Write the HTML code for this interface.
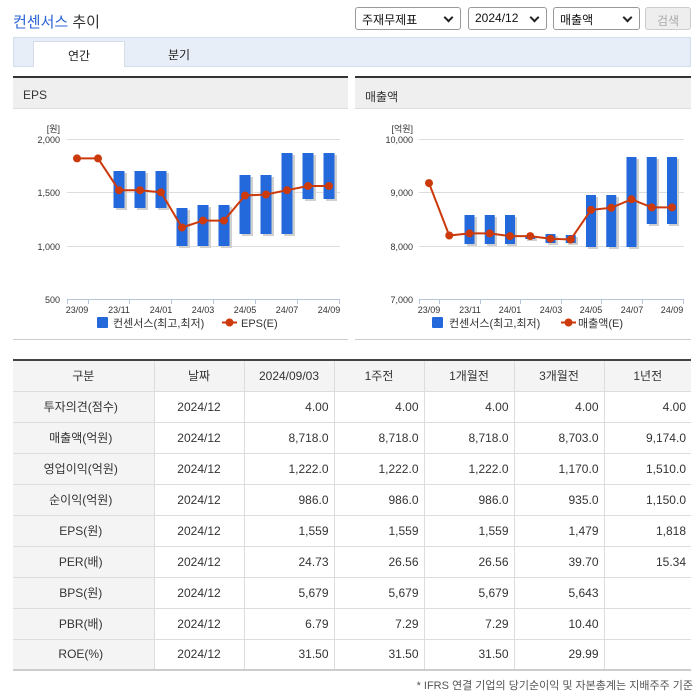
<!DOCTYPE html>
<html><head><meta charset="utf-8"><style>
*{margin:0;padding:0;box-sizing:border-box}
body{width:699px;height:696px;background:#fff;font-family:"Liberation Sans","Noto Sans CJK KR",sans-serif;color:#333;position:relative;overflow:hidden;font-size:12px}
.abs{position:absolute}
.sel{position:absolute;top:7px;height:23px;border:1px solid #999;border-radius:3px;background:#fff;font-size:12px;padding:3px 0 0 6px;color:#111}
.sel:after{content:"";position:absolute;right:8px;top:6px;width:5px;height:5px;border-right:2px solid #222;border-bottom:2px solid #222;transform:rotate(45deg)}
table{position:absolute;left:13px;top:359px;width:678px;border-collapse:collapse;border-top:2px solid #444;border-bottom:2px solid #ccc;font-size:12px}
td,th{height:31px;border-bottom:1px solid #ddd;border-left:1px solid #ddd;font-weight:normal;color:#333}
th{background:#f4f4f4;text-align:center}
td:first-child{background:#f4f4f4;text-align:center;border-left:none}
th:first-child{border-left:none}
td{text-align:right;padding-right:5px}
td.c{text-align:center;padding:0}
</style></head><body>
<div class="abs" style="left:13px;top:11px;font-size:15px"><span style="color:#2962d6">컨센서스</span> 추이</div>
<div class="sel" style="left:355px;width:106px">주재무제표</div>
<div class="sel" style="left:468px;width:79px">2024/12</div>
<div class="sel" style="left:553px;width:87px">매출액</div>
<div class="abs" style="left:645px;top:7px;width:46px;height:23px;border:1px solid #ccc;border-radius:3px;background:#eee;color:#aaa;text-align:center;padding-top:4px">검색</div>
<div class="abs" style="left:13px;top:37px;width:678px;height:30px;background:#e8eef8;border:1px solid #d5ddea"></div>
<div class="abs" style="left:33px;top:41px;width:92px;height:26px;background:#fff;border:1px solid #d5ddea;border-bottom:none;text-align:center;padding-top:5px;color:#222">연간</div>
<div class="abs" style="left:168px;top:46px;color:#222">분기</div>

<div class="abs" style="left:13px;top:76px;width:335px;height:33px;background:#efefef;border-top:2px solid #333;border-bottom:1px solid #ddd;padding:10px 0 0 10px">EPS</div>
<div class="abs" style="left:355px;top:76px;width:336px;height:33px;background:#efefef;border-top:2px solid #333;border-bottom:1px solid #ddd;padding:10px 0 0 10px">매출액</div>
<div class="abs" style="left:13px;top:339px;width:335px;height:1px;background:#ccc"></div>
<div class="abs" style="left:355px;top:339px;width:336px;height:1px;background:#ccc"></div>

<svg class="abs" style="left:0;top:0" width="699" height="696" font-family="Liberation Sans,Noto Sans CJK KR,sans-serif">
<g stroke="#ddd" stroke-width="1">
<line x1="67" y1="139.5" x2="340" y2="139.5"/><line x1="67" y1="192.5" x2="340" y2="192.5"/><line x1="67" y1="246.5" x2="340" y2="246.5"/>
<line x1="419" y1="139.5" x2="684" y2="139.5"/><line x1="419" y1="192.5" x2="684" y2="192.5"/><line x1="419" y1="246.5" x2="684" y2="246.5"/>
</g>
<g stroke="#b8c4d8" stroke-width="1">
<line x1="67" y1="299.5" x2="340" y2="299.5"/><line x1="419" y1="299.5" x2="684" y2="299.5"/>
<path d="M67.5 299v5M88.5 299v5M129.5 299v5M171.5 299v5M213.5 299v5M255.5 299v5M297.5 299v5M339.5 299v5"/>
<path d="M419.5 299v5M439.5 299v5M480.5 299v5M520.5 299v5M561.5 299v5M601.5 299v5M642.5 299v5M683.5 299v5"/>
</g>
<g font-size="9" fill="#333" text-anchor="end">
<text x="60" y="132">[원]</text><text x="60" y="143">2,000</text><text x="60" y="196">1,500</text><text x="60" y="250">1,000</text><text x="60" y="303">500</text>
<text x="413" y="132">[억원]</text><text x="413" y="143">10,000</text><text x="413" y="196">9,000</text><text x="413" y="250">8,000</text><text x="413" y="303">7,000</text>
</g>
<g font-size="9" fill="#333" text-anchor="middle">
<text x="77" y="313">23/09</text><text x="119" y="313">23/11</text><text x="161" y="313">24/01</text><text x="203" y="313">24/03</text><text x="245" y="313">24/05</text><text x="287" y="313">24/07</text><text x="329" y="313">24/09</text>
<text x="429" y="313">23/09</text><text x="470" y="313">23/11</text><text x="510" y="313">24/01</text><text x="551" y="313">24/03</text><text x="591" y="313">24/05</text><text x="632" y="313">24/07</text><text x="672" y="313">24/09</text>
</g>
<g fill="#d0d0d0">
<rect x="116" y="173" width="11" height="37"/><rect x="137" y="173" width="11" height="37"/><rect x="158" y="173" width="11" height="37"/>
<rect x="179" y="210" width="11" height="38"/><rect x="200" y="207" width="11" height="41"/><rect x="221" y="207" width="11" height="41"/>
<rect x="242" y="177" width="11" height="59"/><rect x="263" y="177" width="11" height="59"/><rect x="284" y="155" width="11" height="81"/>
<rect x="305" y="155" width="11" height="46"/><rect x="326" y="155" width="11" height="46"/>
<rect x="467" y="217" width="10" height="29"/><rect x="487" y="217" width="10" height="29"/><rect x="507" y="217" width="10" height="29"/>
<rect x="527" y="238" width="10" height="3"/><rect x="548" y="236" width="10" height="9"/><rect x="568" y="237" width="10" height="8"/>
<rect x="588" y="197" width="10" height="52"/><rect x="609" y="197" width="10" height="52"/><rect x="629" y="159" width="10" height="90"/>
<rect x="649" y="159" width="10" height="67"/><rect x="669" y="159" width="10" height="67"/>
</g>
<g fill="#2369dc">
<rect x="113.5" y="171" width="11" height="37"/><rect x="134.5" y="171" width="11" height="37"/><rect x="155.5" y="171" width="11" height="37"/>
<rect x="176.5" y="208" width="11" height="38"/><rect x="197.5" y="205" width="11" height="41"/><rect x="218.5" y="205" width="11" height="41"/>
<rect x="239.5" y="175" width="11" height="59"/><rect x="260.5" y="175" width="11" height="59"/><rect x="281.5" y="153" width="11" height="81"/>
<rect x="302.5" y="153" width="11" height="46"/><rect x="323.5" y="153" width="11" height="46"/>
<rect x="464.5" y="215" width="10" height="29"/><rect x="484.75" y="215" width="10" height="29"/><rect x="505" y="215" width="10" height="29"/>
<rect x="525.25" y="236" width="10" height="3"/><rect x="545.5" y="234" width="10" height="9"/><rect x="565.75" y="235" width="10" height="8"/>
<rect x="586" y="195" width="10" height="52"/><rect x="606.25" y="195" width="10" height="52"/><rect x="626.5" y="157" width="10" height="90"/>
<rect x="646.75" y="157" width="10" height="67"/><rect x="667" y="157" width="10" height="67"/>
</g>
<g stroke="#cc3a0c" stroke-width="2" fill="none">
<polyline points="77,158.4 98,158.4 119,190.2 140,190.2 161,192.3 182,227.5 203,220.6 224,220.6 245,195.5 266,194.5 287,190.2 308,186 329,186"/>
<polyline points="429,183.1 449.25,235.5 469.5,233.4 489.75,233.4 510,236.1 530.25,236.1 550.5,238.7 570.75,239.5 591,209.9 611.25,207.8 631.5,199.3 651.75,207.4 672,207.4"/>
</g>
<g fill="#cc3a0c">
<circle cx="77" cy="158.4" r="4"/><circle cx="98" cy="158.4" r="4"/><circle cx="119" cy="190.2" r="4"/><circle cx="140" cy="190.2" r="4"/><circle cx="161" cy="192.3" r="4"/><circle cx="182" cy="227.5" r="4"/><circle cx="203" cy="220.6" r="4"/><circle cx="224" cy="220.6" r="4"/><circle cx="245" cy="195.5" r="4"/><circle cx="266" cy="194.5" r="4"/><circle cx="287" cy="190.2" r="4"/><circle cx="308" cy="186" r="4"/><circle cx="329" cy="186" r="4"/>
<circle cx="429" cy="183.1" r="4"/><circle cx="449.25" cy="235.5" r="4"/><circle cx="469.5" cy="233.4" r="4"/><circle cx="489.75" cy="233.4" r="4"/><circle cx="510" cy="236.1" r="4"/><circle cx="530.25" cy="236.1" r="4"/><circle cx="550.5" cy="238.7" r="4"/><circle cx="570.75" cy="239.5" r="4"/><circle cx="591" cy="209.9" r="4"/><circle cx="611.25" cy="207.8" r="4"/><circle cx="631.5" cy="199.3" r="4"/><circle cx="651.75" cy="207.4" r="4"/><circle cx="672" cy="207.4" r="4"/>
</g>
<rect x="97" y="317" width="11" height="11" fill="#2369dc" rx="1"/>
<text x="113" y="327" font-size="11" fill="#333">컨센서스(최고,최저)</text>
<line x1="222" y1="322.5" x2="237" y2="322.5" stroke="#cc3a0c" stroke-width="2"/><circle cx="229.5" cy="322.5" r="4" fill="#cc3a0c"/>
<text x="241" y="327" font-size="11" fill="#333">EPS(E)</text>
<rect x="432" y="317" width="11" height="11" fill="#2369dc" rx="1"/>
<text x="449" y="327" font-size="11" fill="#333">컨센서스(최고,최저)</text>
<line x1="561" y1="322.5" x2="576" y2="322.5" stroke="#cc3a0c" stroke-width="2"/><circle cx="568.5" cy="322.5" r="4" fill="#cc3a0c"/>
<text x="578" y="327" font-size="11" fill="#333">매출액(E)</text>
</svg>

<table>
<colgroup><col style="width:141px"><col style="width:90px"><col style="width:90px"><col style="width:90px"><col style="width:90px"><col style="width:90px"><col style="width:87px"></colgroup>
<tr><th>구분</th><th>날짜</th><th>2024/09/03</th><th>1주전</th><th>1개월전</th><th>3개월전</th><th>1년전</th></tr>
<tr><td>투자의견(점수)</td><td class="c">2024/12</td><td>4.00</td><td>4.00</td><td>4.00</td><td>4.00</td><td>4.00</td></tr>
<tr><td>매출액(억원)</td><td class="c">2024/12</td><td>8,718.0</td><td>8,718.0</td><td>8,718.0</td><td>8,703.0</td><td>9,174.0</td></tr>
<tr><td>영업이익(억원)</td><td class="c">2024/12</td><td>1,222.0</td><td>1,222.0</td><td>1,222.0</td><td>1,170.0</td><td>1,510.0</td></tr>
<tr><td>순이익(억원)</td><td class="c">2024/12</td><td>986.0</td><td>986.0</td><td>986.0</td><td>935.0</td><td>1,150.0</td></tr>
<tr><td>EPS(원)</td><td class="c">2024/12</td><td>1,559</td><td>1,559</td><td>1,559</td><td>1,479</td><td>1,818</td></tr>
<tr><td>PER(배)</td><td class="c">2024/12</td><td>24.73</td><td>26.56</td><td>26.56</td><td>39.70</td><td>15.34</td></tr>
<tr><td>BPS(원)</td><td class="c">2024/12</td><td>5,679</td><td>5,679</td><td>5,679</td><td>5,643</td><td></td></tr>
<tr><td>PBR(배)</td><td class="c">2024/12</td><td>6.79</td><td>7.29</td><td>7.29</td><td>10.40</td><td></td></tr>
<tr><td>ROE(%)</td><td class="c">2024/12</td><td>31.50</td><td>31.50</td><td>31.50</td><td>29.99</td><td></td></tr>
</table>
<div class="abs" style="right:6px;top:677px;font-size:11px;color:#555">* IFRS 연결 기업의 당기순이익 및 자본총계는 지배주주 기준</div>
</body></html>
